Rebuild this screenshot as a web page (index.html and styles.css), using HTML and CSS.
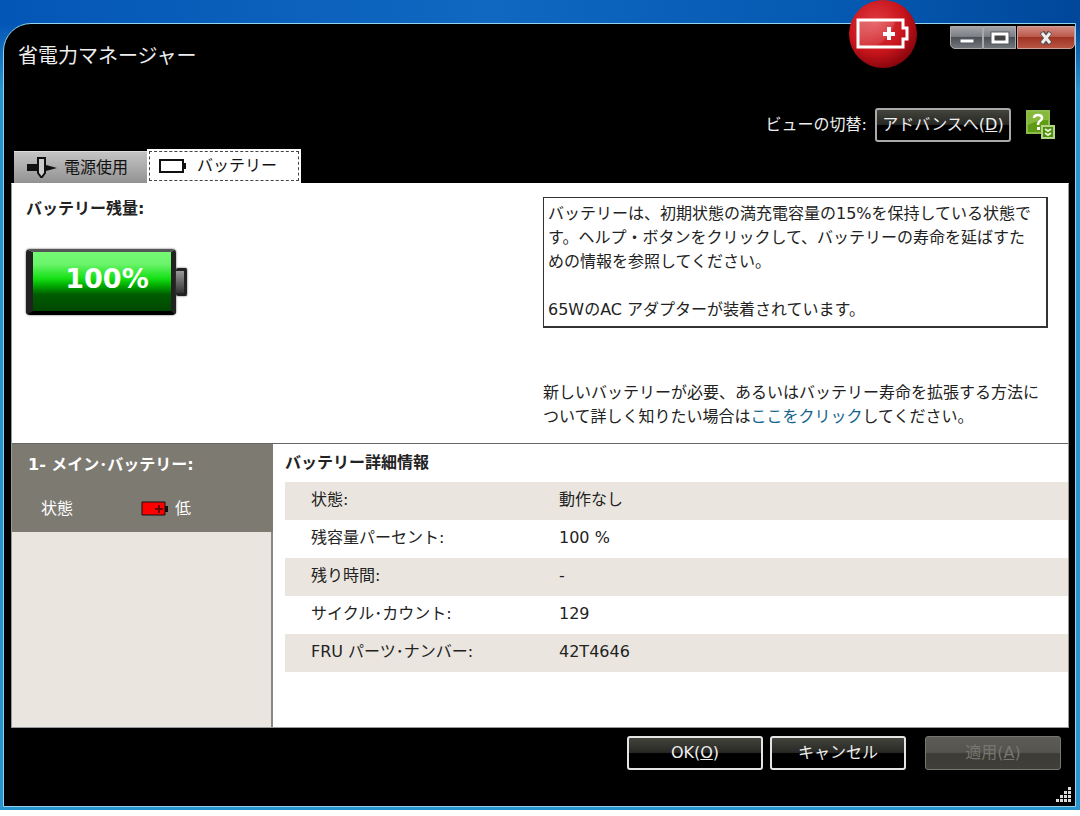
FILE: index.html
```
<!DOCTYPE html>
<html lang="ja">
<head>
    <meta charset="UTF-8">
    <title>省電力マネージャー</title>
    <link rel="stylesheet" href="styles.css">
</head>
<body>
<div class="desktop">
    <div class="window">
        <header class="title-bar">
            <h1>省電力マネージャー</h1>
            <div class="window-buttons">
                <button type="button" class="min" aria-label="最小化">
                    <svg width="18" height="14" viewBox="0 0 18 14"><rect x="2" y="8" width="14" height="4" fill="#fff" stroke="#555a60"/></svg>
                </button>
                <button type="button" class="max" aria-label="最大化">
                    <svg width="20" height="14" viewBox="0 0 20 14"><rect x="3" y="3" width="14" height="8" fill="none" stroke="#555a60" stroke-width="5"/><rect x="3" y="3" width="14" height="8" fill="#444" stroke="#fff" stroke-width="3"/></svg>
                </button>
                <button type="button" class="close" aria-label="閉じる">
                    <svg width="16" height="14" viewBox="0 0 16 14"><path d="M4 1l8 12M12 1L4 13" stroke="#5a4a50" stroke-width="5"/><path d="M4 2l8 10M12 2L4 12" stroke="#eee" stroke-width="3"/></svg>
                </button>
            </div>
        </header>

        <svg class="battery-ball" width="68" height="68" viewBox="0 0 68 68">
            <defs>
                <radialGradient id="ball" cx="40%" cy="35%" r="70%">
                    <stop offset="0" stop-color="#e03c40"/>
                    <stop offset="0.6" stop-color="#c8141c"/>
                    <stop offset="1" stop-color="#80040a"/>
                </radialGradient>
                <linearGradient id="shine" x1="0" y1="0" x2="1" y2="1">
                    <stop offset="0" stop-color="#fff" stop-opacity="0.3"/>
                    <stop offset="1" stop-color="#fff" stop-opacity="0.02"/>
                </linearGradient>
            </defs>
            <circle cx="34" cy="34" r="34" fill="url(#ball)"/>
            <path d="M10 20h36q-2 16-20 27h-16z" fill="url(#shine)"/>
            <path d="M9 20h45v8h4v11h-4v8H9z" fill="none" stroke="#fff" stroke-width="3"/>
            <path d="M40 27v13M34 34h12" stroke="#fff" stroke-width="4"/>
        </svg>

        <div class="view-bar">
            <span>ビューの切替:</span>
            <button type="button" class="btn btn-view">アドバンスへ(<u>D</u>)</button>
            <a href="#help" class="help" aria-label="ヘルプ">
                <svg width="30" height="30" viewBox="0 0 30 30">
                    <rect x="1" y="1" width="22" height="22" fill="#5f9c14" stroke="#8cbc4c" stroke-width="2"/>
                    <path d="M2 2h20v8q-10 0-20 5z" fill="#86b83a"/>
                    <path d="M8 8q0-3 4-3t4 3q0 2-2 3t-2 4" fill="none" stroke="#fff" stroke-width="2.5"/>
                    <rect x="11" y="17" width="3" height="3" fill="#fff"/>
                    <rect x="16" y="16" width="12" height="12" fill="#4f8c0c" stroke="#b4d488" stroke-width="2"/>
                    <path d="M19 19l3 2 3-2M19 23l3 2 3-2" fill="none" stroke="#e4f0d0" stroke-width="2"/>
                </svg>
            </a>
        </div>

        <nav class="tabs">
            <button type="button" class="tab">
                <svg width="32" height="24" viewBox="0 0 32 24"><path d="M1 8h11v7H1z" fill="#111"/><path d="M12 2h7v15l-3 4h-1l-3-4z" fill="#ccc" stroke="#111" stroke-width="2"/><path d="M20 9l11 3-11 3z" fill="#111"/></svg>
                <span>電源使用</span>
            </button>
            <button type="button" class="tab active">
                <svg width="28" height="14" viewBox="0 0 28 14"><path d="M1 1h23v12H1z" fill="#fff" stroke="#111" stroke-width="2"/><path d="M25 4h2v6h-2z" fill="#111"/></svg>
                <span>バッテリー</span>
            </button>
        </nav>

        <main class="panel">
            <section class="summary">
                <div class="level">
                    <h2>バッテリー残量:</h2>
                    <div class="battery">
                        <div class="battery-body">100%</div>
                        <div class="battery-cap"></div>
                    </div>
                </div>
                <div class="info">
                    <div class="message">
                        <p>バッテリーは、初期状態の満充電容量の15%を保持している状態です。ヘルプ・ボタンをクリックして、バッテリーの寿命を延ばすための情報を参照してください。</p>
                        <p>65WのAC アダプターが装着されています。</p>
                    </div>
                    <p>新しいバッテリーが必要、あるいはバッテリー寿命を拡張する方法について詳しく知りたい場合は<a href="#battery">ここをクリック</a>してください。</p>
                </div>
            </section>
            <section class="details">
                <aside class="side">
                    <div class="side-item">
                        <h2>1- メイン･バッテリー:</h2>
                        <div class="side-status">
                            <span class="side-label">状態</span>
                            <svg width="28" height="16" viewBox="0 0 28 16"><path d="M1 1h23v13H1z" fill="#f00" stroke="#111" stroke-width="1"/><path d="M24 5h3v6h-3z" fill="#111"/><path d="M18 4v8M14 8h8" stroke="#600" stroke-width="2"/></svg>
                            <span>低</span>
                        </div>
                    </div>
                </aside>
                <div class="detail">
                    <h2>バッテリー詳細情報</h2>
                    <table>
                        <tr><th scope="row">状態:</th><td>動作なし</td></tr>
                        <tr><th scope="row">残容量パーセント:</th><td>100 %</td></tr>
                        <tr><th scope="row">残り時間:</th><td>-</td></tr>
                        <tr><th scope="row">サイクル･カウント:</th><td>129</td></tr>
                        <tr><th scope="row">FRU パーツ･ナンバー:</th><td>42T4646</td></tr>
                    </table>
                </div>
            </section>
        </main>

        <footer class="actions">
            <button type="button" class="btn">OK(<u>O</u>)</button>
            <button type="button" class="btn">キャンセル</button>
            <button type="button" class="btn btn-apply" disabled>適用(<u>A</u>)</button>
        </footer>
        <svg class="grip" width="16" height="16" viewBox="0 0 16 16" fill="#ddd">
            <path d="M12 0h3v3h-3zM8 4h3v3H8zM12 4h3v3h-3zM4 8h3v3H4zM8 8h3v3H8zM12 8h3v3h-3zM0 12h3v3H0zM4 12h3v3H4zM8 12h3v3H8zM12 12h3v3h-3z"/>
        </svg>
    </div>
</div>
</body>
</html>
```
FILE: styles.css
```
* {
    box-sizing: border-box;
}
body {
    margin: 0;
    min-height: 100vh;
    display: flex;
    padding-bottom: 6px;
    background: #fff;
    color: #222;
    font: 16px/24px "DejaVu Sans", "Noto Sans CJK JP", sans-serif;
}
h1, h2, p {
    margin: 0;
}
h2 {
    font-size: 16px;
    line-height: 24px;
}
button {
    font: inherit;
    cursor: pointer;
}
.desktop {
    flex: 1;
    display: flex;
    padding: 23px 4px 3px 3px;
    background: linear-gradient(#0000 24px, #2a94cc 90px), linear-gradient(90deg, #0456b6, #1068c0 45%, #0458b0 80%, #00479a);
}
.window {
    flex: 1;
    position: relative;
    display: flex;
    flex-direction: column;
    min-width: 0;
    background: #000;
    border: 1px solid #90d4f0;
    border-radius: 28px 0 0 0;
}
.title-bar {
    display: flex;
    justify-content: space-between;
    align-items: flex-start;
    height: 84px;
    padding: 2px 0 0 14px;
}
.title-bar h1 {
    padding-top: 16px;
    color: #eee;
    font-size: 20px;
    font-weight: normal;
    line-height: 28px;
}
.window-buttons {
    display: flex;
}
.window-buttons button {
    display: flex;
    align-items: center;
    justify-content: center;
    width: 33px;
    height: 23px;
    padding: 0;
    border: 1px solid #aaa;
    background: linear-gradient(#a2a4a8, #7c7f84 45%, #4c5056 50%, #73777c);
}
.window-buttons .min {
    border-radius: 0 0 0 5px;
}
.window-buttons .close {
    width: 58px;
    margin-left: 1px;
    border-color: #d0a098;
    border-radius: 0 0 5px 0;
    background: linear-gradient(#d08a80, #bc5a4c 45%, #a03424 50%, #b85442);
}
.battery-ball {
    position: absolute;
    top: -24px;
    right: 158px;
}
.view-bar {
    display: flex;
    justify-content: flex-end;
    align-items: center;
    gap: 8px;
    padding-right: 19px;
    color: #eee;
}
.btn {
    width: 136px;
    height: 34px;
    padding: 0;
    color: #eee;
    border: 2px solid #e4e4e4;
    border-radius: 3px;
    background: linear-gradient(#44443e, #282824 48%, #000 52%, #000);
}
.btn-view {
    border-color: #aaa;
}
.btn-apply {
    margin-left: 12px;
    color: #77776f;
    border: 1px solid #77776f;
    background: linear-gradient(#5c5b55, #55544e 48%, #3c3b36 52%, #403f3a);
}
.help {
    display: flex;
    margin-left: 7px;
}
.tabs {
    display: flex;
    align-items: flex-end;
    padding: 7px 0 0 10px;
}
.tab {
    display: flex;
    align-items: center;
    gap: 6px;
    width: 133px;
    height: 32px;
    padding: 0 0 0 12px;
    color: #111;
    border: 0;
    border-top: 1px solid #ddd;
    background: linear-gradient(#c4c4c4, #929292);
}
.tab.active {
    gap: 10px;
    width: 154px;
    height: 34px;
    background: #fff;
    border: 0;
    outline: 1px dashed #444;
    outline-offset: -3px;
}
.panel {
    flex: 1;
    display: flex;
    flex-direction: column;
    margin: 0 6px 0 7px;
    background: #fff;
    border: 1px solid #999;
    border-top-color: #fff;
}
.summary {
    display: flex;
    justify-content: space-between;
    min-height: 259px;
    padding: 13px 20px 0 14px;
}
.battery {
    display: flex;
    align-items: center;
    margin-top: 28px;
}
.battery-body {
    width: 150px;
    height: 66px;
    padding-left: 10px;
    color: #fff;
    font-size: 27px;
    font-weight: bold;
    line-height: 54px;
    text-align: center;
    border: 4px solid #111;
    border-width: 3px 5px 4px 7px;
    border-color: #555 #222 #000;
    border-radius: 4px;
    background: linear-gradient(#74f874, #6cf46c 20%, #14e014 45%, #00a400 58%, #005c00 72%, #004800);
    box-shadow: 0 0 2px #444;
}
.battery-cap {
    width: 11px;
    height: 28px;
    border: 3px solid #222;
    border-left: 0;
    border-radius: 2px;
    background: linear-gradient(#999, #333);
    box-shadow: 0 0 2px #444;
}
.info {
    width: 505px;
}
.message {
    min-height: 130px;
    margin-bottom: 53px;
    padding: 4px 12px 4px 4px;
    border: 2px solid #333;
    border-width: 1px 2px 2px 1px;
}
.message p + p {
    margin-top: 24px;
}
.info a {
    color: #14648c;
    text-decoration: none;
}
.details {
    flex: 1;
    display: flex;
    border-top: 1px solid #666;
}
.side {
    width: 261px;
    background: #eae6df;
    border-right: 2px solid #888;
}
.side-item {
    height: 88px;
    margin-right: -2px;
    padding: 9px 16px;
    color: #fff;
    background: #7d7a72;
}
.side-status {
    display: flex;
    align-items: center;
    gap: 6px;
    margin-top: 20px;
    padding-left: 13px;
}
.side-label {
    width: 94px;
}
.detail {
    flex: 1;
    padding: 7px 0 0 12px;
    color: #222;
}
.detail table {
    width: 100%;
    margin-top: 7px;
    border-collapse: collapse;
}
.detail tr:nth-child(odd) {
    background: #eae6df;
}
.detail th,
.detail td {
    height: 38px;
    padding: 0 0 2px;
    font-weight: normal;
    text-align: left;
}
.detail th {
    width: 274px;
    padding-left: 26px;
}
.actions {
    display: flex;
    justify-content: flex-end;
    gap: 7px;
    padding: 8px 14px 36px;
}
.grip {
    position: absolute;
    right: 3px;
    bottom: 3px;
}
```
